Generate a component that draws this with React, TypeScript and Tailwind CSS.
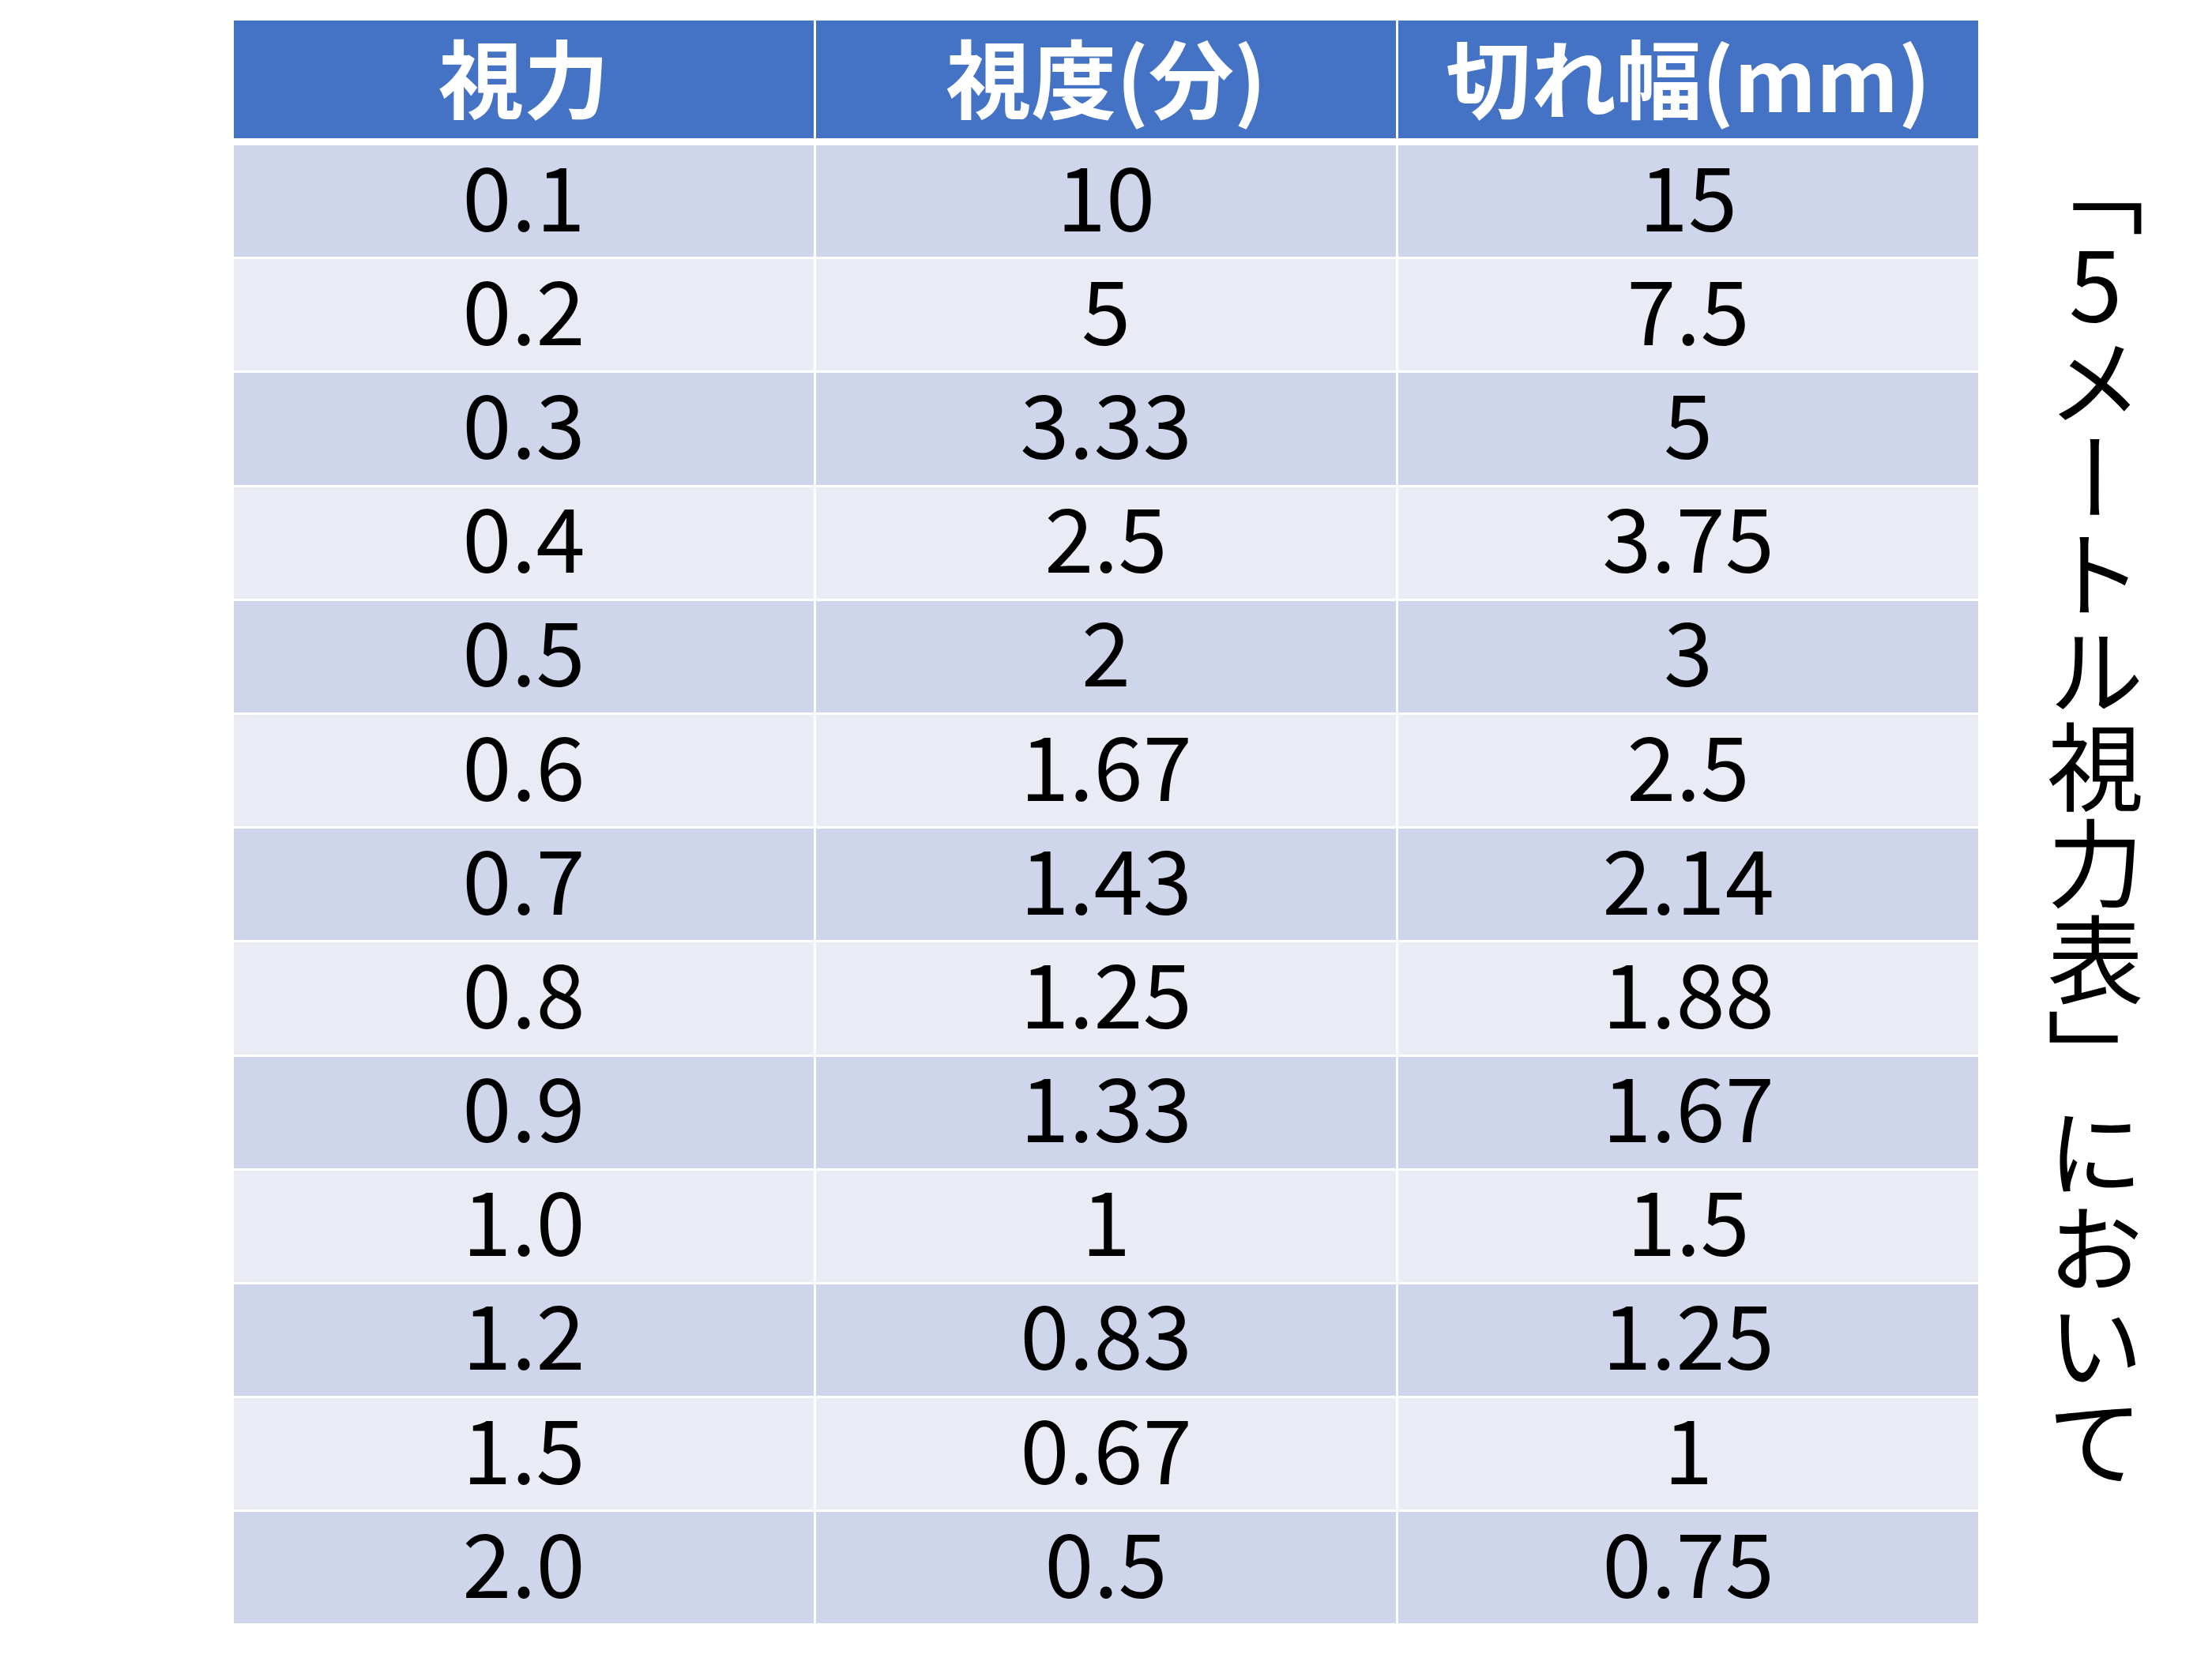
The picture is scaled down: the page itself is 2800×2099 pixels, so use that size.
const rows: [string, string, string][] = [
  ['0.1', '10', '15'],
  ['0.2', '5', '7.5'],
  ['0.3', '3.33', '5'],
  ['0.4', '2.5', '3.75'],
  ['0.5', '2', '3'],
  ['0.6', '1.67', '2.5'],
  ['0.7', '1.43', '2.14'],
  ['0.8', '1.25', '1.88'],
  ['0.9', '1.33', '1.67'],
  ['1.0', '1', '1.5'],
  ['1.2', '0.83', '1.25'],
  ['1.5', '0.67', '1'],
  ['2.0', '0.5', '0.75'],
];

const headers = ['視力', '視度(分)', '切れ幅(mm)'];

export default function App() {
  return (
    <div className="flex w-[2800px] h-[2099px] bg-white font-['Noto_Sans_CJK_JP',sans-serif] text-black">
      <div className="ml-[296px] mt-[26px] flex flex-col w-[2208px]">
        <div className="grid grid-cols-3 gap-x-[3px] h-[149px]">
          {headers.map((h) => (
            <div
              key={h}
              className="flex items-center justify-center pb-[12px] bg-[#4472c4] text-white text-[108px] font-bold leading-none"
            >
              {h}
            </div>
          ))}
        </div>
        <div className="mt-[9px] flex flex-col gap-y-[3px]">
          {rows.map((r, i) => (
            <div key={r[0]} className="grid grid-cols-3 gap-x-[3px] h-[141.2px]">
              {r.map((v, j) => (
                <div
                  key={j}
                  className={
                    'flex items-center justify-center pb-[22px] text-[112px] leading-none ' +
                    (i % 2 === 0 ? 'bg-[#cfd5ea]' : 'bg-[#e9ebf5]')
                  }
                >
                  {v}
                </div>
              ))}
            </div>
          ))}
        </div>
      </div>
      <div className="ml-[87px] mt-[178px] w-[122px] flex justify-center">
        <p className="[writing-mode:vertical-rl] [text-orientation:upright] text-[122px] leading-none">
          「5メートル視力表」において
        </p>
      </div>
    </div>
  );
}
